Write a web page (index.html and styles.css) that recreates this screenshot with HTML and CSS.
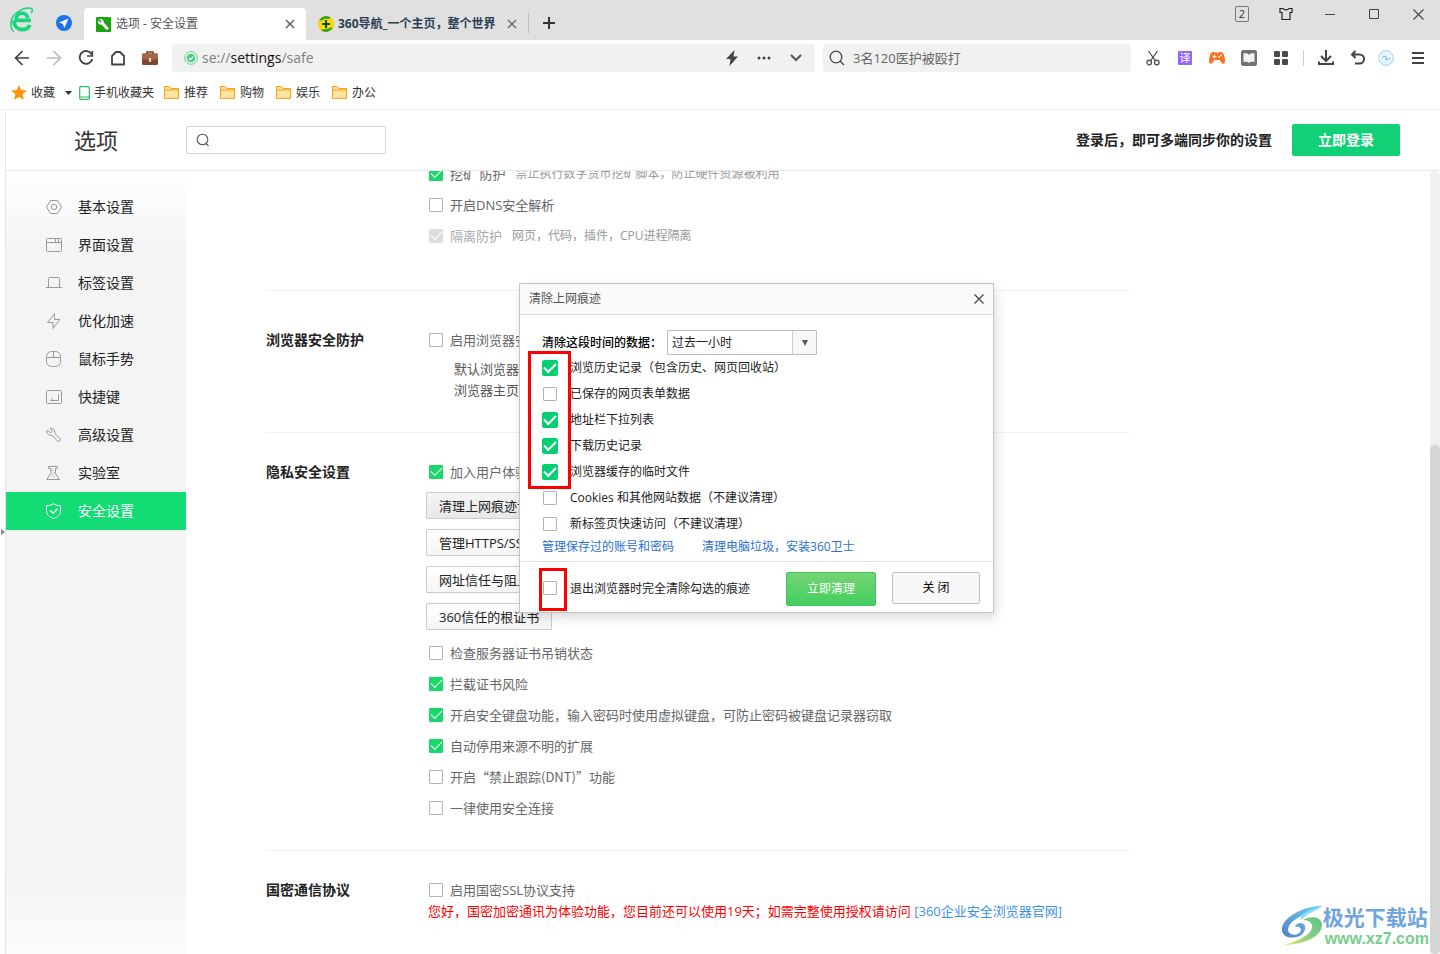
FILE: index.html
```html
<!DOCTYPE html>
<html lang="zh-CN">
<head>
<meta charset="utf-8">
<title>选项 - 安全设置</title>
<link rel="stylesheet" href="styles.css">
</head>
<body>
<header class="tabbar">
  <div class="brand">
    <svg width="24" height="26" viewBox="0 0 24 26" fill="none"><path d="M21 13.500H6C6 8.500 9 6.300 12.200 6.300c3.300 0 5.200 2.400 5.200 5" stroke="#18d67c" stroke-width="3.600"/><path d="M20.800 13.300h-15" stroke="#18d67c" stroke-width="3.200"/><path d="M4 13.500c0 6 4 9 8.300 9 3.600 0 6.300-1.600 7.600-4.600" stroke="#18d67c" stroke-width="3.800"/><path d="M1 16C1 8 12 0 21 1.200c2 .5 1.400 3.200.3 5" stroke="#18d67c" stroke-width="1.600"/><path d="M1.200 15c-.6 4 .2 8 2.800 9.500" stroke="#18d67c" stroke-width="1.400"/></svg>
  </div>
  <button class="pilot" aria-label="导航"><svg width="16" height="16" viewBox="0 0 16 16"><circle cx="8" cy="8" r="8" fill="#1b74ee"/><path d="M12.500 3.500 3 7.500l3.700 1.300L8.500 13z" fill="#fff"/></svg></button>
  <div class="tab tab-active">
    <svg width="15" height="15" viewBox="0 0 15 15"><rect width="15" height="15" rx="1" fill="#1fa20f"/><path d="M3.200 2.200 5.600 4.600 4.600 5.700 2.200 3.300C1.300 5.600 3 8 5.500 7.600l4.700 4.800c1.600 1 3-.6 2.100-1.900L7.700 5.600C8 3 5.600 1.300 3.200 2.200z" fill="#fff"/></svg>
    <span class="tab-title">选项 - 安全设置</span>
    <button class="tab-close" aria-label="关闭标签"><svg width="10" height="10" viewBox="0 0 10 10" stroke="#555" stroke-width="1.300"><path d="M1 1l8 8M9 1 1 9"/></svg></button>
  </div>
  <div class="tab tab-idle">
    <svg width="16" height="16" viewBox="0 0 16 16"><circle cx="8" cy="8" r="8" fill="#f5d800"/><path d="M1 4.500A8 8 0 0 1 13 1.800L8 4z" fill="#36a52a"/><path d="M15 11.500A8 8 0 0 1 3 14.200L8 12z" fill="#36a52a"/><circle cx="8" cy="8" r="5" fill="#ffe600"/><path d="M8 4v8M4 8h8" stroke="#174d12" stroke-width="2.200"/></svg>
    <span class="tab-title">360导航_一个主页，整个世界</span>
    <button class="tab-close" aria-label="关闭标签"><svg width="10" height="10" viewBox="0 0 10 10" stroke="#666" stroke-width="1.300"><path d="M1 1l8 8M9 1 1 9"/></svg></button>
  </div>
  <button class="new-tab" aria-label="新标签"><svg width="12" height="12" viewBox="0 0 12 12" stroke="#333" stroke-width="2"><path d="M6 0v12M0 6h12"/></svg></button>
  <div class="window-controls">
    <button><span class="count">2</span></button>
    <button aria-label="皮肤"><svg width="14" height="14" viewBox="0 0 14 14" fill="none" stroke="#222" stroke-width="1.200"><path d="M4 1.500H1v4h2v7h8v-7h2v-4h-3c-1 1.700-5 1.700-6 0z"/></svg></button>
    <button aria-label="最小化"><svg width="10" height="10" viewBox="0 0 10 10" stroke="#444"><path d="M0 5.500h10"/></svg></button>
    <button aria-label="最大化"><svg width="10" height="10" viewBox="0 0 10 10" fill="none" stroke="#444"><path d="M.5.500h9v9h-9z"/></svg></button>
    <button aria-label="关闭"><svg width="11" height="11" viewBox="0 0 11 11" stroke="#444" stroke-width="1.100"><path d="M.5.500l10 10M10.500.500l-10 10"/></svg></button>
  </div>
</header>

<div class="toolbar">
  <nav class="nav-buttons">
    <button aria-label="后退"><svg width="16" height="16" viewBox="0 0 16 16" fill="none" stroke="#444" stroke-width="1.700"><path d="M15 8H2M8.500 1 1.500 8l7 7"/></svg></button>
    <button aria-label="前进"><svg width="16" height="16" viewBox="0 0 16 16" fill="none" stroke="#bbb" stroke-width="1.700"><path d="M1 8h13M7.500 1l7 7-7 7"/></svg></button>
    <button aria-label="刷新"><svg width="16" height="16" viewBox="0 0 16 16" fill="none" stroke="#444" stroke-width="1.900"><path d="M13.800 4.500A6.400 6.400 0 1 0 14.300 9"/><path d="M14.300 1v5H9" stroke-width="1.700"/></svg></button>
    <button aria-label="主页"><svg width="16" height="16" viewBox="0 0 16 16" fill="none" stroke="#444" stroke-width="1.800"><path d="M2 14.500V6l4-4h4l4 4v8.500z" stroke-linejoin="round"/></svg></button>
    <button aria-label="工具箱"><svg width="18" height="16" viewBox="0 0 18 16"><path d="M6 4V2h6v2" fill="none" stroke="#70412c" stroke-width="1.600"/><rect x="1" y="3.500" width="16" height="11.500" rx="1.500" fill="#7d4932"/><path d="M1 5c0-1 .7-1.500 1.500-1.500h13c.8 0 1.500.5 1.500 1.500v4c-5 1.500-11 1.500-16 0z" fill="#a9654a"/><rect x="8" y="8" width="2" height="4" fill="#f3d9a0"/></svg></button>
  </nav>
  <div class="address">
    <svg width="14" height="14" viewBox="0 0 14 14" fill="none"><circle cx="7" cy="7" r="6.300" stroke="#5ed38c"/><circle cx="7" cy="7" r="4.300" fill="#4ccc7d"/><path d="M4.800 7l1.600 1.600 3-3.100" stroke="#fff" stroke-width="1.200"/></svg>
    <a class="url" href="#"><span>se://</span><b>settings</b><span>/safe</span></a>
    <button aria-label="极速模式"><svg width="14" height="16" viewBox="0 0 14 16"><path d="M9.500 0 1 9h4.500L4.500 16 13 6.500H8.500z" fill="#444"/></svg></button>
    <button aria-label="更多"><svg width="14" height="4" viewBox="0 0 14 4" fill="#444"><circle cx="2" cy="2" r="1.500"/><circle cx="7" cy="2" r="1.500"/><circle cx="12" cy="2" r="1.500"/></svg></button>
    <button aria-label="展开"><svg width="12" height="8" viewBox="0 0 12 8" fill="none" stroke="#555" stroke-width="2"><path d="M1 1l5 5 5-5"/></svg></button>
  </div>
  <label class="search">
    <svg width="16" height="16" viewBox="0 0 16 16" fill="none" stroke="#444" stroke-width="1.300"><circle cx="7" cy="7" r="5.800"/><path d="M11 11l4 4"/></svg>
    <input type="text" value="3名120医护被殴打" aria-label="搜索">
  </label>
  <div class="tools">
    <button aria-label="截图"><svg width="14" height="16" viewBox="0 0 14 16" fill="none" stroke="#444" stroke-width="1.200"><path d="M2.500 1 9.500 11M11.500 1 4.500 11"/><circle cx="3.200" cy="12.500" r="2.300"/><circle cx="10.800" cy="12.500" r="2.300"/></svg></button>
    <button aria-label="翻译"><span class="translate">译</span></button>
    <button aria-label="游戏"><svg width="18" height="14" viewBox="0 0 18 14"><path d="M5 1C2.500 1 1 6 1 10c0 3 2 3.500 3.500 1.500L6.500 9h5l2 2.500C15 13.500 17 13 17 10c0-4-1.500-9-4-9-1.500 0-1.500.7-4 .7S6.500 1 5 1z" fill="#ff7020"/><path d="M6.500 3.500v4M4.500 5.500h4" stroke="#fff" stroke-width="1.200"/><circle cx="11" cy="6" r=".9" fill="#fff"/><circle cx="13" cy="4.500" r=".9" fill="#fff"/></svg></button>
    <button aria-label="阅读"><svg width="16" height="16" viewBox="0 0 16 16"><rect width="16" height="16" rx="2.500" fill="#707277"/><path d="M2.500 3.500C5 3 7 3.300 8 5c1-1.700 3-2 5.500-1.500V12C11 11.600 9 11.800 8 13c-1-1.200-3-1.400-5.500-1z" fill="#f2f2f2"/></svg></button>
    <button aria-label="扩展"><svg width="14" height="14" viewBox="0 0 14 14" fill="#4a4a4a"><rect width="6" height="6" rx="1"/><rect x="8" width="6" height="6" rx="1"/><rect y="8" width="6" height="6" rx="1"/><rect x="8" y="8" width="6" height="6" rx="1"/></svg></button>
    <i class="divider"></i>
    <button aria-label="下载"><svg width="16" height="16" viewBox="0 0 16 16" fill="none" stroke="#444" stroke-width="2"><path d="M8 0v11M3 6l5 5 5-5M1 11.500V14h14v-2.500"/></svg></button>
    <button aria-label="恢复"><svg width="16" height="16" viewBox="0 0 16 16" fill="none" stroke="#444" stroke-width="2"><path d="M5.500 1 2 4.500 5.500 8M2 4.500h7.500a4.500 4.500 0 0 1 0 9H5"/></svg></button>
    <button class="tight" aria-label="同步"><svg width="16" height="16" viewBox="0 0 16 16" fill="none" stroke="#8cc4f3"><circle cx="8" cy="8" r="7.200" stroke="#b4dcfb" stroke-width="1.400"/><path d="M2 5.500C5 2.500 9 3 13.500 6M2.500 10.500c4 3 8 2.500 11.500 0" stroke="#d3eafc" stroke-width="1.200"/><path d="M3.500 8.500 6 6l4 4 2.500-2.500M7.500 5.500 9 7M7 9l1.500 1.500" stroke-width="1.200"/></svg></button>
    <button class="wide" aria-label="菜单"><svg width="12" height="12" viewBox="0 0 12 12" stroke="#444" stroke-width="2"><path d="M0 1h12M0 6h12M0 11h12"/></svg></button>
  </div>
</div>

<nav class="bookmarks">
  <a class="fav" href="#"><svg width="16" height="15" viewBox="0 0 16 15"><path d="M8 0l2.200 5.100 5.600.5-4.200 3.700 1.200 5.500L8 12l-4.800 2.800 1.200-5.500L.2 5.600l5.600-.5z" fill="#ff9408"/></svg>收藏</a>
  <svg class="caret" width="7" height="4" viewBox="0 0 7 4"><path d="M0 0h7L3.500 4z" fill="#333"/></svg>
  <a class="mobile" href="#"><svg width="11" height="14" viewBox="0 0 11 14" fill="none"><rect x=".7" y=".7" width="9.600" height="12.600" rx="1" stroke="#2fb76f" stroke-width="1.200"/><path d="M1 11h9.500" stroke="#2fb76f"/></svg>手机收藏夹</a>
  <a class="folder" href="#"><svg width="15" height="13" viewBox="0 0 15 13"><path d="M.5.500h5l1.500 2h7.500v10H.5z" fill="#ffe3a0" stroke="#f9a01b"/><path d="M.5 4h14" stroke="#f9a01b"/></svg>推荐</a>
  <a class="folder" href="#"><svg width="15" height="13" viewBox="0 0 15 13"><path d="M.5.500h5l1.500 2h7.500v10H.5z" fill="#ffe3a0" stroke="#f9a01b"/><path d="M.5 4h14" stroke="#f9a01b"/></svg>购物</a>
  <a class="folder" href="#"><svg width="15" height="13" viewBox="0 0 15 13"><path d="M.5.500h5l1.500 2h7.500v10H.5z" fill="#ffe3a0" stroke="#f9a01b"/><path d="M.5 4h14" stroke="#f9a01b"/></svg>娱乐</a>
  <a class="folder" href="#"><svg width="15" height="13" viewBox="0 0 15 13"><path d="M.5.500h5l1.500 2h7.500v10H.5z" fill="#ffe3a0" stroke="#f9a01b"/><path d="M.5 4h14" stroke="#f9a01b"/></svg>办公</a>
</nav>

<div class="page">
  <header class="page-head">
    <h1>选项</h1>
    <label class="find">
      <svg width="14" height="14" viewBox="0 0 14 14" fill="none" stroke="#555" stroke-width="1.100"><circle cx="6.500" cy="6.500" r="5.300"/><path d="M10 10.500l2.500 2.500"/></svg>
      <input type="text" aria-label="搜索设置">
    </label>
    <span class="sync">登录后，即可多端同步你的设置</span>
    <button class="login">立即登录</button>
  </header>

  <div class="page-body">
    <nav class="sidebar">
      <a href="#"><svg viewBox="0 0 16 16"><path d="M4.500 1.500h7l4 6.500-4 6.500h-7L.5 8z"/><circle cx="8" cy="8" r="2.700"/></svg>基本设置</a>
      <a href="#"><svg viewBox="0 0 16 16"><rect x=".5" y="1.500" width="15" height="13" rx="1"/><path d="M.5 5.500h15M9.500 2v3M12.500 2v3"/></svg>界面设置</a>
      <a href="#"><svg viewBox="0 0 16 16"><path d="M2.500 12.500v-9a1 1 0 0 1 1-1h9a1 1 0 0 1 1 1v9M0 12.500h16"/></svg>标签设置</a>
      <a href="#"><svg viewBox="0 0 16 16"><path d="M8.500.800 1.500 9.500H7v6L14 6.500H8.500z"/></svg>优化加速</a>
      <a href="#"><svg viewBox="0 0 16 16"><rect x=".5" y=".5" width="14" height="15" rx="5"/><path d="M.5 6.500h14M7.500 1v5.500"/></svg>鼠标手势</a>
      <a href="#"><svg viewBox="0 0 16 16"><rect x=".5" y="1.500" width="15" height="13" rx="1"/><path d="M12.500 5v6.500H4.500L7 9M4.500 11.500H8"/></svg>快捷键</a>
      <a href="#"><svg viewBox="0 0 16 16"><path d="M4 1.500 6.500 4 4.500 6 1.500 3C0 6 2.500 9 6 8.200l5.500 6c2 1 3.500-1 2.500-2.500L8.700 6.200C9.500 3 7 .500 4 1.500z"/></svg>高级设置</a>
      <a href="#"><svg viewBox="0 0 16 16"><path d="M2.500 1.500h9v2h-2v5l4 6H.8l4-6v-5h-2.300z"/><path d="M6.500 5v1M8 7v1M6.500 9v1M8 11v1"/></svg>实验室</a>
      <a class="current" href="#"><svg viewBox="0 0 16 16"><path d="M7.500.700c2 1.500 4.500 2 7 2v5.500c0 3.500-3 6-7 7.300-4-1.300-7-3.800-7-7.300V2.700c2.500 0 5-.5 7-2z"/><path d="M4.300 7.500 7 10.200l4.500-4.500" stroke-width="1.400"/></svg>安全设置</a>
    </nav>

    <main class="content">
      <section class="group first">
        <div class="options">
          <label class="opt"><input type="checkbox" checked><span>挖矿 防护</span><small>禁止执行数字货币挖矿脚本，防止硬件资源被利用</small></label>
          <label class="opt"><input type="checkbox">开启DNS安全解析</label>
          <label class="opt off"><input type="checkbox" checked disabled><span>隔离防护</span><small>网页，代码，插件，CPU进程隔离</small></label>
        </div>
      </section>
      <section class="group spaced">
        <h2>浏览器安全防护</h2>
        <div class="options">
          <label class="opt"><input type="checkbox">启用浏览器安全防护</label>
          <p class="note">默认浏览器：<br>浏览器主页：</p>
        </div>
      </section>
      <section class="group">
        <h2>隐私安全设置</h2>
        <div class="options">
          <label class="opt"><input type="checkbox" checked>加入用户体验改善</label>
          <div class="actions">
            <button class="pressed">清理上网痕迹设置</button>
            <button>管理HTTPS/SSL证书</button>
            <button>网址信任与阻止</button>
            <button>360信任的根证书</button>
          </div>
          <label class="opt"><input type="checkbox">检查服务器证书吊销状态</label>
          <label class="opt"><input type="checkbox" checked>拦截证书风险</label>
          <label class="opt"><input type="checkbox" checked>开启安全键盘功能，输入密码时使用虚拟键盘，可防止密码被键盘记录器窃取</label>
          <label class="opt"><input type="checkbox" checked>自动停用来源不明的扩展</label>
          <label class="opt quoted"><input type="checkbox">开启“禁止跟踪(DNT)”功能</label>
          <label class="opt"><input type="checkbox">一律使用安全连接</label>
        </div>
      </section>
      <section class="group">
        <h2>国密通信协议</h2>
        <div class="options">
          <label class="opt"><input type="checkbox">启用国密SSL协议支持</label>
          <p class="trial">您好，国密加密通讯为体验功能，您目前还可以使用19天；如需完整使用授权请访问 <a href="#">[360企业安全浏览器官网]</a></p>
        </div>
      </section>
    </main>
    <div class="scroll"><i></i></div>
  </div>
</div>

<svg class="edge-handle" width="4" height="6" viewBox="0 0 4 6"><path d="M0 0l4 3-4 3z" fill="#888"/></svg>

<div class="dialog" role="dialog" aria-label="清除上网痕迹">
  <div class="dialog-head"><span>清除上网痕迹</span><button aria-label="关闭"><svg width="10" height="10" viewBox="0 0 10 10" stroke="#444" stroke-width="1.200"><path d="M.5.500l9 9M9.500.500l-9 9"/></svg></button></div>
  <div class="dialog-body">
    <div class="range"><label for="period">清除这段时间的数据：</label>
      <span class="picker"><select id="period"><option>过去一小时</option></select><i><svg width="8" height="6" viewBox="0 0 8 6"><path d="M1 0h6L4 6z" fill="#555"/></svg></i></span>
    </div>
    <label class="item"><input type="checkbox" checked>浏览历史记录（包含历史、网页回收站）</label>
    <label class="item"><input type="checkbox">已保存的网页表单数据</label>
    <label class="item"><input type="checkbox" checked>地址栏下拉列表</label>
    <label class="item"><input type="checkbox" checked>下载历史记录</label>
    <label class="item"><input type="checkbox" checked>浏览器缓存的临时文件</label>
    <label class="item"><input type="checkbox">Cookies 和其他网站数据（不建议清理）</label>
    <label class="item"><input type="checkbox">新标签页快速访问（不建议清理）</label>
    <div class="links"><a href="#">管理保存过的账号和密码</a><a href="#">清理电脑垃圾，安装360卫士</a></div>
  </div>
  <div class="dialog-foot">
    <label class="item"><input type="checkbox">退出浏览器时完全清除勾选的痕迹</label>
    <button class="go">立即清理</button>
    <button class="cancel">关 闭</button>
  </div>
  <i class="mark mark-list"></i>
  <i class="mark mark-exit"></i>
</div>

<div class="watermark">
  <svg width="42" height="42" viewBox="0 0 42 42"><defs><linearGradient id="wb" x1="0" y1="1" x2="1" y2="0"><stop offset="0" stop-color="#5580c8"/><stop offset="1" stop-color="#6fd3f7"/></linearGradient><linearGradient id="wg" x1="0" y1="1" x2="1" y2="0"><stop offset="0" stop-color="#e8ec6a"/><stop offset=".5" stop-color="#86cd80"/><stop offset="1" stop-color="#5fc58c"/></linearGradient></defs><path d="M42 1C27 0 3 10 1 23c-1 8 7 11 14 9 7-1 10-7 9-11-2-5-9-3-10 1 3-1 6 0 6 3-1 4-6 6-10 4-6-3-2-11 5-15C22 9 31 5 42 1z" fill="url(#wb)"/><path d="M20 10C28 5 34 3 41 2 33 6 26 9 20 15z" fill="#8adcf8"/><path d="M22 15c8-5 19-3 19 5C41 31 23 40 3 40c13-4 26-9 28-17 1-5-3-8-9-8z" fill="url(#wg)"/></svg>
  <div><strong>极光下载站</strong><span>www.xz7.com</span></div>
</div>
</body>
</html>
```
FILE: styles.css
```css
* { box-sizing: border-box; }
body {
  margin: 0;
  height: 100vh;
  display: flex;
  flex-direction: column;
  overflow: hidden;
  position: relative;
  background: #fff;
  color: #333;
  font: 13px/20px "Open Sans", "Noto Sans CJK SC", sans-serif;
}
button, input, select { font: inherit; color: inherit; }
button { border: 0; padding: 0; background: none; display: flex; align-items: center; justify-content: center; }
a { color: inherit; text-decoration: none; }
h1, h2, p { margin: 0; }
svg { flex: none; }

.tabbar { display: flex; align-items: flex-end; height: 40px; flex: none; background: #e0e0e0; font-size: 12px; }
.brand { width: 44px; height: 40px; display: flex; align-items: center; justify-content: center; }
.pilot { width: 40px; height: 34px; }
.tab { display: flex; align-items: center; height: 32px; width: 222px; padding: 0 10px 0 12px; gap: 5px; }
.tab-active { background: #fff; border-radius: 4px 4px 0 0; color: #555; }
.tab-idle { color: #2b3e55; font-weight: 700; gap: 4px; }
.tab-title { flex: 1; white-space: nowrap; }
.tab-close { width: 12px; height: 16px; }
.new-tab { width: 40px; height: 20px; margin-bottom: 7px; border-left: 1px solid #bbb; }
.window-controls { display: flex; align-self: flex-start; margin-left: auto; }
.window-controls button { width: 44px; height: 28px; }
.count { width: 14px; height: 16px; border: 1px solid #777; border-radius: 2px; font-size: 11px; line-height: 14px; }

.toolbar { display: flex; align-items: center; height: 36px; flex: none; padding-left: 6px; }
.nav-buttons { display: flex; width: 166px; }
.nav-buttons button { width: 32px; height: 28px; }
.address { flex: 1; display: flex; align-items: center; height: 28px; padding: 0 3px 0 12px; border-radius: 4px; background: #f1f1f1; }
.url { flex: 1; padding-left: 4px; font-size: 14px; color: #808080; }
.url b { font-weight: 400; color: #111; }
.address button { width: 32px; height: 28px; }
.search { display: flex; align-items: center; width: 308px; height: 28px; margin: 0 6px 0 8px; padding: 0 6px; gap: 8px; border-radius: 4px; background: #f1f1f1; }
.search input { flex: 1; min-width: 0; border: 0; padding: 0; background: none; color: #666; outline: 0; }
.tools { display: flex; align-items: center; padding-right: 2px; }
.tools button { width: 32px; height: 28px; }
.tools .tight { width: 24px; }
.tools .wide { width: 40px; }
.divider { width: 1px; height: 16px; margin: 0 6px; background: #ccc; }
.translate { width: 14px; height: 14px; border-radius: 1px; background: #9465ff; color: #fff; font-size: 11px; line-height: 14px; }

.bookmarks { display: flex; align-items: center; height: 34px; flex: none; padding-left: 11px; border-bottom: 1px solid #eee; font-size: 12px; }
.bookmarks a { display: flex; align-items: center; gap: 4px; }
.caret { margin: 0 7px 0 10px; }
.bookmarks .folder { gap: 5px; margin-right: 12px; }
.bookmarks .mobile { margin-right: 10px; }

.page { flex: 1; min-height: 0; display: flex; flex-direction: column; margin-left: 5px; border-left: 1px solid #e6e6e6; }
.page-head { display: flex; align-items: center; height: 61px; flex: none; padding-right: 40px; border-bottom: 1px solid #e8e8e8; }
.page-head h1 { width: 180px; padding-left: 68px; font-size: 22px; line-height: 30px; font-weight: 400; }
.find { display: flex; align-items: center; width: 200px; height: 28px; padding-left: 9px; border: 1px solid #d4d4d4; border-radius: 1px; }
.find input { flex: 1; min-width: 0; border: 0; outline: 0; background: none; }
.sync { margin-left: auto; font-size: 14px; font-weight: 700; color: #222; }
.login { width: 108px; height: 32px; margin-left: 20px; border-radius: 2px; background: #11d076; color: #fff; font-size: 14px; font-weight: 700; }

.page-body { flex: 1; min-height: 0; display: flex; overflow: hidden; }
.sidebar { width: 180px; flex: none; padding-top: 17px; background: linear-gradient(#fff, #f4f4f4 80px, #f4f4f4 calc(100% - 80px), #fbfbfb); font-size: 14px; color: #222; }
.sidebar a { display: flex; align-items: center; gap: 16px; height: 38px; padding-left: 40px; }
.sidebar svg { width: 16px; height: 16px; fill: none; stroke: #999; stroke-width: 1; }
.sidebar .current { background: #12dc73; color: #fff; }
.sidebar .current svg { stroke: #fff; }

.content { flex: 1; padding: 0 80px; }
.group { display: flex; max-width: 864px; padding: 28px 0 32px; border-bottom: 1px solid #f0f0f0; }
.group:last-child { border-bottom: 0; }
.group h2 { width: 163px; flex: none; font-size: 14px; line-height: 21px; font-weight: 700; color: #222; }
.first { margin-top: -36px; padding: 28px 0 44px 163px; }
.spaced { padding: 38px 0 31px; }
.options { display: flex; flex-direction: column; gap: 10px; white-space: nowrap; }
.opt { display: flex; align-items: center; height: 21px; color: #666; }
.opt small { margin-left: 10px; font-size: 12px; color: #999; }
.opt.off { color: #aaa; }
.quoted { font-family: "Noto Sans CJK SC", sans-serif; }
.note { margin: -1px 0 0 25px; line-height: 21px; color: #555; }
.actions { display: flex; flex-direction: column; align-items: flex-start; gap: 10px; margin: 0 0 2px -3px; }
.actions button { height: 27px; padding: 0 12px; border: 1px solid #ccc; border-radius: 1px; background: linear-gradient(#fff, #f5f5f5); color: #222; }
.actions .pressed { background: linear-gradient(#f5f5f5, #e8e8e8); }
.trial { margin: -9px 0 0 -1px; color: #f00; }
.trial a { color: #3d8fe8; }

input[type="checkbox"] { appearance: none; display: grid; place-items: center; width: 14px; height: 14px; flex: none; margin: 0 7px 0 0; border: 1px solid #b4b4b4; border-radius: 1px; background: #fff; }
input[type="checkbox"]:checked { border-color: #1ad76a; background: #1ad76a; }
input[type="checkbox"]:checked:disabled { border-color: #ddd; background: #ddd; }
input[type="checkbox"]:checked::after { content: ""; width: 10px; height: 5px; margin-bottom: 3px; border: solid #fff; border-width: 0 0 1px 1px; transform: rotate(-45deg); }

.scroll { display: flex; align-items: flex-end; width: 10px; border-radius: 5px 5px 0 0; background: #f0f0f0; }
.scroll i { width: 10px; height: 65%; border-radius: 5px; background: #d5d5d5; }
.edge-handle { position: absolute; left: 1px; top: 529px; }

.dialog { position: absolute; left: 519px; top: 283px; width: 475px; border: 1px solid #c4c4c4; background: #fff; box-shadow: 2px 5px 10px rgba(0, 0, 0, .14); color: #222; font-size: 12px; }
.dialog-head { display: flex; align-items: center; justify-content: space-between; height: 31px; padding: 0 9px; border-bottom: 1px solid #d8d8d8; background: #fafafa; color: #555; }
.dialog-body { padding: 15px 22px 4px; }
.range { display: flex; align-items: center; height: 25px; color: #000; font-weight: 500; }
.picker { display: flex; position: relative; width: 150px; height: 25px; margin-left: 5px; border: 1px solid #b9bcc8; border-radius: 1px; font-weight: 400; }
.picker select { appearance: none; flex: 1; border: 0; padding: 0 28px 0 4px; background: none; color: #222; outline: 0; }
.picker i { position: absolute; right: 0; top: 0; bottom: 0; width: 24px; display: grid; place-items: center; border-left: 1px solid #ccced6; background: #f7f7f7; pointer-events: none; }
.item { display: flex; align-items: center; height: 26px; }
.item input[type="checkbox"] { margin: 0 13px 1px 1px; }
.item input[type="checkbox"]:checked { width: 16px; height: 16px; margin: 0 12px 1px 0; border-color: #06cf71; border-radius: 2px; background: #06cf71; }
.item input[type="checkbox"]:checked::after { border-width: 0 0 2px 2px; }
.links { display: flex; gap: 28px; height: 20px; color: #2b6fd3; }
.dialog-foot { display: flex; align-items: flex-start; height: 51px; padding: 10px 13px 0 22px; border-top: 1px solid #e4e4e4; }
.dialog-foot .item { flex: 1; height: 33px; }
.dialog-foot button { border-radius: 2px; }
.go { width: 90px; height: 34px; margin-right: 16px; border: 1px solid #43c35c; background: linear-gradient(#74d473, #43ce60); color: #fff; }
.cancel { width: 88px; height: 32px; border: 1px solid #bfbfbf; background: #f7f7f7; color: #000; }
.mark { position: absolute; border: 3px solid #f00; pointer-events: none; }
.mark-list { left: 8px; top: 67px; width: 43px; height: 138px; }
.mark-exit { left: 19px; top: 284px; width: 28px; height: 43px; }

.watermark { position: absolute; right: 11px; bottom: 6px; display: flex; align-items: center; }
.watermark div { display: flex; flex-direction: column; }
.watermark strong { font-size: 21px; line-height: 26px; color: #6fa5dc; }
.watermark span { padding-left: 2px; font: 700 16px/18px "Liberation Sans", sans-serif; color: #77cc8b; }
```
